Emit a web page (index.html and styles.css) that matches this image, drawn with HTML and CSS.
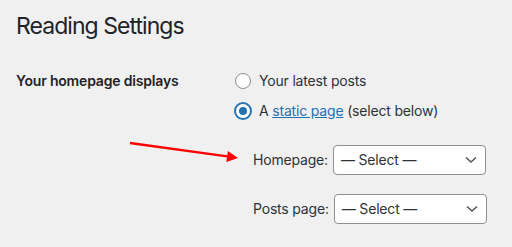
FILE: index.html
```html
<!DOCTYPE html>
<html lang="en">

<head>
    <meta charset="UTF-8">
    <meta name="viewport" content="width=device-width, initial-scale=1.0">
    <title>Reading Settings</title>
    <link rel="stylesheet" href="styles.css">
</head>

<body>
    <div class="wrap">
        <h1>Reading Settings</h1>

        <div class="form-row">
            <div class="row-label">Your homepage displays</div>
            <div class="row-field">
                <label class="radio-line">
                    <span class="radio"></span>
                    Your latest posts
                </label>
                <label class="radio-line">
                    <span class="radio checked"></span>
                    A&nbsp;<a href="#">static page</a>&nbsp;(select below)
                </label>

                <div class="page-selects">
                    <div class="select-line">
                        <span class="select-label">Homepage:</span>
                        <div class="select">
                            <span>— Select —</span>
                            <svg width="12" height="8" viewBox="0 0 12 8">
                                <path d="M1 1.5 L6 6 L11 1.5" fill="none" stroke="#50575e" stroke-width="1.6" />
                            </svg>
                        </div>
                    </div>
                    <div class="select-line">
                        <span class="select-label">Posts page:</span>
                        <div class="select">
                            <span>— Select —</span>
                            <svg width="12" height="8" viewBox="0 0 12 8">
                                <path d="M1 1.5 L6 6 L11 1.5" fill="none" stroke="#50575e" stroke-width="1.6" />
                            </svg>
                        </div>
                    </div>
                </div>
            </div>
        </div>
    </div>

    <!-- annotation arrow -->
    <svg class="arrow" width="512" height="247" viewBox="0 0 512 247">
        <line x1="130" y1="143" x2="229" y2="156.6" stroke="#ff0000" stroke-width="2.4" />
        <polygon points="238,158 226.3,162 227.9,151" fill="#ff0000" />
    </svg>
</body>

</html>
```

FILE: styles.css
```css
body {
    margin: 0;
    background: #f0f0f1;
    font-family: Inter, "Noto Sans", sans-serif;
    font-size: 14px;
    line-height: 20px;
    letter-spacing: -0.18px;
    color: #1d2327;
}

.wrap {
    padding: 12px 0 0 16px;
}

h1 {
    margin: 0;
    font-size: 23px;
    line-height: 29px;
    font-weight: 400;
    letter-spacing: -0.95px;
    color: #1d2327;
}

.form-row {
    display: flex;
    margin-top: 30px;
}

.row-label {
    width: 219px;
    font-weight: 600;
}

.row-field {
    display: flex;
    flex-direction: column;
    gap: 10px;
}

.radio-line {
    display: flex;
    align-items: center;
    color: #2c3338;
}

.radio {
    box-sizing: border-box;
    width: 16px;
    height: 16px;
    margin-right: 8px;
    border: 1px solid #8c8f94;
    border-radius: 50%;
    background: #fff;
    display: flex;
    align-items: center;
    justify-content: center;
}

.radio.checked {
    border-color: #2271b1;
    box-shadow: 0 0 0 1px #2271b1;
}

.radio.checked::after {
    content: "";
    width: 8px;
    height: 8px;
    border-radius: 50%;
    background: #2271b1;
}

a {
    color: #2271b1;
    text-decoration: underline;
}

.page-selects {
    display: flex;
    flex-direction: column;
    gap: 19px;
    margin-top: 14px;
    padding-left: 18px;
}

.select-line {
    display: flex;
    align-items: center;
    color: #2c3338;
}

.select-label {
    margin-right: 5px;
}

.select {
    box-sizing: border-box;
    width: 153px;
    height: 30px;
    padding: 0 8px 0 7px;
    border: 1px solid #8c8f94;
    border-radius: 4px;
    background: #fff;
    display: flex;
    align-items: center;
    justify-content: space-between;
    color: #2c3338;
}

.arrow {
    position: absolute;
    left: 0;
    top: 0;
    pointer-events: none;
}
```
